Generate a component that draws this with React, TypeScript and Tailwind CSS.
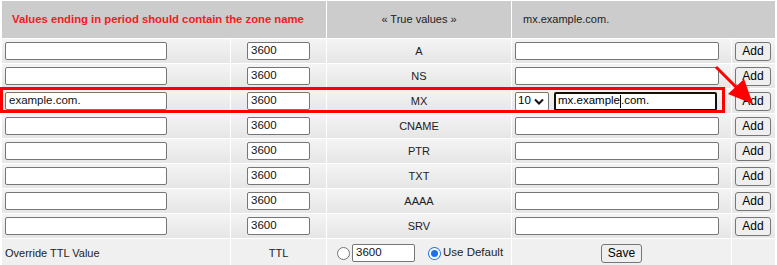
import React from "react";

const types = ["A", "NS", "MX", "CNAME", "PTR", "TXT", "AAAA", "SRV"];

const rowBg = "bg-gradient-to-b from-[#f4f4f4] to-[#e6e6e6]";

function TextBox({ w, value = "" }: { w: string; value?: string }) {
  return (
    <div
      className={`${w} h-[18px] border border-[#767676] rounded-[2px] bg-white px-[3px] flex items-center text-[11.5px] text-[#111] leading-none`}
    >
      {value}
    </div>
  );
}

function Btn({ label }: { label: string }) {
  return (
    <div className="h-[19px] px-[6px] border border-[#767676] rounded-[3px] bg-[#efefef] flex items-center text-[12px] text-black leading-none">
      {label}
    </div>
  );
}

function Radio({ checked }: { checked?: boolean }) {
  return checked ? (
    <div className="w-[13px] h-[13px] rounded-full bg-[#1a73e8] flex items-center justify-center">
      <div className="w-[11px] h-[11px] rounded-full bg-white flex items-center justify-center">
        <div className="w-[7px] h-[7px] rounded-full bg-[#1a73e8]" />
      </div>
    </div>
  ) : (
    <div className="w-[13px] h-[13px] rounded-full border border-[#767676] bg-white" />
  );
}

export default function App() {
  return (
    <div className="relative w-[777px] h-[265px] overflow-hidden bg-white font-['Liberation_Sans',Arial,sans-serif] text-[11px] text-[#222]">
      <div className="pt-px px-[2px]">
        <div className="grid grid-cols-[228px_95px_184px_219px_43px] gap-px bg-white">
          {/* header */}
          <div className="col-span-2 h-[37px] bg-[#cccccc] flex items-center pl-[10px] font-bold text-[11.3px] text-[#f01c24]">
            Values ending in period should contain the zone name
          </div>
          <div className="h-[37px] bg-[#cccccc] flex items-center justify-center">« True values »</div>
          <div className="col-span-2 h-[37px] bg-[#cccccc] flex items-center pl-[11px]">mx.example.com.</div>

          {types.map((t) => (
            <React.Fragment key={t}>
              <div className={`h-[24px] ${rowBg} flex items-center pl-[3px]`}>
                <TextBox w="w-[162px]" value={t === "MX" ? "example.com." : ""} />
              </div>
              <div className={`h-[24px] ${rowBg} flex items-center justify-center`}>
                <TextBox w="w-[63px]" value="3600" />
              </div>
              <div className={`h-[24px] ${rowBg} flex items-center justify-center text-[11px]`}>{t}</div>
              <div className={`h-[24px] ${rowBg} flex items-center pl-[3px] gap-[5px]`}>
                {t === "MX" ? (
                  <>
                    <div className="w-[34px] h-[19px] border border-[#767676] rounded-[2px] bg-white flex items-center pl-[2px] gap-[3px] text-[11.5px] text-black leading-none">
                      10
                      <svg width="10" height="7" viewBox="0 0 10 7">
                        <path d="M1 1.5 L5 5.5 L9 1.5" fill="none" stroke="#111" strokeWidth="2" />
                      </svg>
                    </div>
                    <div className="w-[163px] h-[19px] border-2 border-[#101010] rounded-[2px] bg-white flex items-center pl-[2px] text-[11.5px] text-black leading-none">
                      mx.example
                      <span className="inline-block w-px h-[13px] bg-black" />
                      .com.
                    </div>
                  </>
                ) : (
                  <TextBox w="w-[204px]" />
                )}
              </div>
              <div className={`h-[24px] ${rowBg} flex items-center justify-center pr-px`}>
                <Btn label="Add" />
              </div>
            </React.Fragment>
          ))}

          {/* bottom row */}
          <div className="h-[28px] bg-[#f0f0f0] flex items-center pl-[3px]">Override TTL Value</div>
          <div className="h-[28px] bg-[#f0f0f0] flex items-center justify-center">TTL</div>
          <div className="h-[28px] bg-[#f0f0f0] flex items-center pl-[10px]">
            <Radio />
            <div className="ml-[2px]">
              <TextBox w="w-[63px]" value="3600" />
            </div>
            <div className="ml-[13px]">
              <Radio checked />
            </div>
            <span className="ml-[2px] text-[11.5px]">Use Default</span>
          </div>
          <div className="h-[28px] bg-[#f0f0f0] flex items-center justify-center">
            <Btn label="Save" />
          </div>
          <div className="h-[28px] bg-[#f0f0f0]" />
        </div>
      </div>

      {/* annotation: highlight box */}
      <div className="absolute left-0 top-[87px] w-[725px] h-[26px] border-[3px] border-[#ff0000]" />

      {/* annotation: arrow */}
      <svg className="absolute left-0 top-0" width="777" height="265" viewBox="0 0 777 265">
        <line x1="716" y1="67" x2="738" y2="89" stroke="#ff0000" strokeWidth="3" />
        <polygon points="753,104 728,94 744,79" fill="#ff0000" />
      </svg>
    </div>
  );
}
